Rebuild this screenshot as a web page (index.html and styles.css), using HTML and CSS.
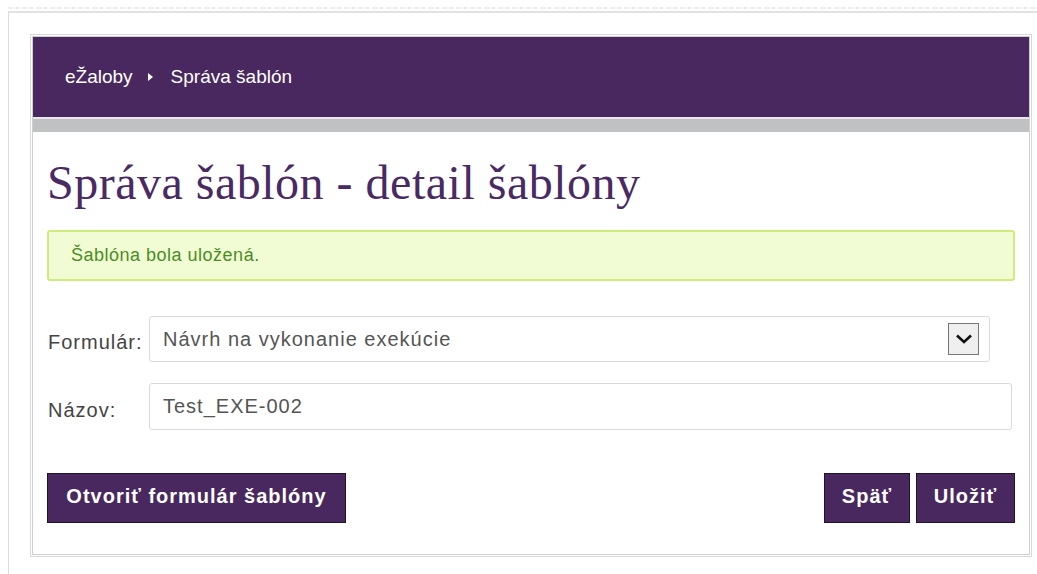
FILE: index.html
```html
<!DOCTYPE html>
<html lang="sk">
<head>
<meta charset="utf-8">
<title>Správa šablón - detail šablóny</title>
<link rel="stylesheet" href="styles.css">
</head>
<body>
<div class="strip"></div>
<div class="page">
  <div class="panel">
    <div class="panel-inner">
      <header class="topbar">
        <nav class="crumbs">
          <span class="crumb">eŽaloby</span>
          <span class="crumb-sep"></span>
          <span class="crumb">Správa šablón</span>
        </nav>
      </header>
      <div class="subbar"></div>
      <main class="content">
        <h1 class="title">Správa šablón - detail šablóny</h1>
        <div class="notice">Šablóna bola uložená.</div>
        <div class="form">
          <div class="row">
            <label class="label">Formulár:</label>
            <div class="select">
              <span class="select-value">Návrh na vykonanie exekúcie</span>
              <span class="select-btn">
                <svg width="18" height="12" viewBox="0 0 18 12"><path d="M2 2.5 L9 9 L16 2.5" fill="none" stroke="#111" stroke-width="2.6"/></svg>
              </span>
            </div>
          </div>
          <div class="row">
            <label class="label label-low">Názov:</label>
            <div class="input">Test_EXE-002</div>
          </div>
        </div>
        <div class="actions">
          <button class="btn btn-open">Otvoriť formulár šablóny</button>
          <div class="actions-right">
            <button class="btn btn-back">Späť</button>
            <button class="btn btn-save">Uložiť</button>
          </div>
        </div>
      </main>
    </div>
  </div>
</div>
</body>
</html>
```
FILE: styles.css
```css
html, body {
  margin: 0;
  padding: 0;
  background: #fff;
}

body {
  font-family: "Liberation Sans", Arial, sans-serif;
  color: #444;
  width: 1037px;
  height: 574px;
  overflow: hidden;
}

/* faint cut-off row above the frame line */
.strip {
  margin: 7px 0 0 8px;
  height: 2px;
  background: repeating-linear-gradient(90deg, #eeeeee 0 5px, #f8f8f8 5px 8px, #e8e8e8 8px 11px, #fdfdfd 11px 14px);
}

.page {
  margin: 2px 0 0 8px;
  border-top: 2px solid #e2e2e2;
  border-left: 1px solid #dcdcdc;
  padding: 21px 0 0 21px;
  height: 540px;
  box-sizing: content-box;
}

.panel {
  width: 998px;
  border: 1px solid #d8d8d8;
  padding: 1px;
}

.panel-inner {
  border: 1px solid #cfcfcf;
}

.topbar {
  background: #48285e;
  height: 80px;
  border-bottom: 2px solid #e8e6ea;
  display: flex;
  align-items: center;
  padding-left: 32px;
}

.crumbs {
  display: flex;
  align-items: center;
  color: #fff;
  font-size: 19px;
}

.crumb-sep {
  width: 0;
  height: 0;
  border-top: 4.5px solid transparent;
  border-bottom: 4.5px solid transparent;
  border-left: 5px solid #fff;
  margin: 0 18px 0 15px;
}

.subbar {
  height: 13px;
  background: #c0c1c3;
}

.content {
  padding: 0 14px 31px 14px;
}

.title {
  margin: 0;
  padding-top: 27px;
  font-family: "Liberation Serif", Georgia, serif;
  font-weight: normal;
  font-size: 48px;
  line-height: 48px;
  letter-spacing: 0.5px;
  color: #4a2a62;
}

.notice {
  margin-top: 23px;
  height: 47px;
  border: 2px solid #cdec7c;
  border-radius: 3px;
  background: #f1fcd4;
  color: #4b8c1f;
  font-size: 18px;
  letter-spacing: 0.5px;
  display: flex;
  align-items: center;
  padding-left: 22px;
}

.form {
  margin-top: 35px;
  display: flex;
  flex-direction: column;
  gap: 21px;
}

.row {
  display: flex;
  align-items: center;
}

.label {
  width: 101px;
  padding-left: 1px;
  font-size: 20px;
  letter-spacing: 1px;
  color: #444;
  margin-top: 6px;
}

.label-low {
  margin-top: 8px;
}

.select {
  box-sizing: border-box;
  width: 841px;
  height: 46px;
  border: 1px solid #dadada;
  border-radius: 3px;
  display: flex;
  align-items: center;
  justify-content: space-between;
  padding-left: 13px;
  padding-right: 10px;
  font-size: 20px;
  letter-spacing: 1px;
  color: #555;
}

.select-btn {
  width: 29px;
  height: 30px;
  border: 1px solid #777;
  background: #efefef;
  display: flex;
  align-items: center;
  justify-content: center;
}

.input {
  box-sizing: border-box;
  width: 863px;
  height: 47px;
  border: 1px solid #dadada;
  border-radius: 3px;
  padding-left: 13px;
  display: flex;
  align-items: center;
  font-size: 20px;
  letter-spacing: 1px;
  color: #555;
}

.actions {
  margin-top: 43px;
  display: flex;
  justify-content: space-between;
}

.actions-right {
  display: flex;
  gap: 6px;
}

.btn {
  box-sizing: border-box;
  height: 50px;
  margin: 0;
  padding: 0 0 3px 0;
  background: #48285e;
  border: 1px solid #1e1424;
  color: #fff;
  font-family: "Liberation Sans", Arial, sans-serif;
  font-weight: bold;
  font-size: 20px;
  letter-spacing: 1px;
  cursor: pointer;
}

.btn-open {
  width: 299px;
}

.btn-back {
  width: 86px;
}

.btn-save {
  width: 99px;
}
```
